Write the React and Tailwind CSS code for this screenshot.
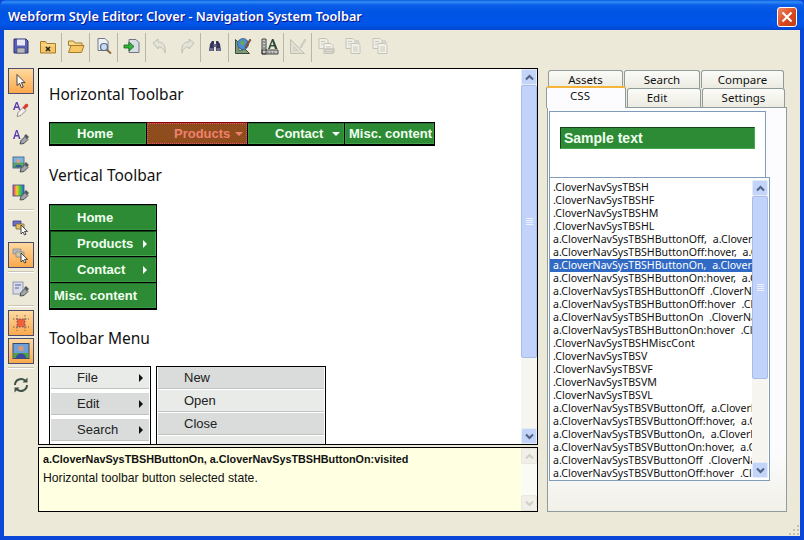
import React from "react";

const Shell = ({ children, className = "" }) => (
  <svg width="18" height="18" viewBox="0 0 18 18" className={className}>
    {children}
  </svg>
);

const SaveIcon = () => (
  <Shell>
    <path d="M2 2h12l2 2v12H2z" fill="#5a62b8" stroke="#2c2f6e" />
    <rect x="5" y="2.500" width="8" height="6" fill="#e8e8f4" />
    <rect x="5" y="11" width="8" height="5" fill="#b8b8b8" stroke="#44446a" strokeWidth=".6" />
  </Shell>
);
const FolderIcon = ({ mark }) => (
  <Shell>
    <path d="M1.500 4.500h5l1.500 2h8.500v9.500h-15z" fill="#f3c768" stroke="#a67c28" />
    <path d="M2 8h14" stroke="#fbe3a0" />
    {mark && <path d="M7 10l4 4M11 10l-4 4" stroke="#222" strokeWidth="1.600" />}
  </Shell>
);
const OpenFolderIcon = () => (
  <Shell>
    <path d="M1.500 4h5l1.500 2h7v2.500h-13.500z" fill="#f6d98c" stroke="#a67c28" />
    <path d="M1.500 15.500l2.500-7h13l-2.500 7z" fill="#f5c765" stroke="#a67c28" />
  </Shell>
);
const DocSearchIcon = () => (
  <Shell>
    <path d="M3 1.500h7l3 3v9h-10z" fill="#eef0f4" stroke="#70788a" />
    <circle cx="9" cy="10" r="3.500" fill="#c8dcf4" stroke="#5a6a88" strokeWidth="1.200" />
    <path d="M11.500 12.500l4.500 4" stroke="#8a6a40" strokeWidth="2" />
  </Shell>
);
const ImportIcon = () => (
  <Shell>
    <path d="M6 2.500h7l3 3v10h-10z" fill="#d8dde4" stroke="#6e7684" />
    <path d="M1 8h5V5l5 4.500-5 4.500v-3H1z" fill="#2fb53a" stroke="#14601c" strokeWidth=".8" />
  </Shell>
);
const UndoIcon = ({ flip }) => (
  <Shell>
    <g transform={flip ? "matrix(-1 0 0 1 18 0)" : undefined}>
      <path d="M2 6l5-4v3c5 0 8 3 7 11-1-4-3-6-7-6v2z" fill="#e4e3da" stroke="#c0bfb4" />
    </g>
  </Shell>
);
const BinocularsIcon = () => (
  <Shell>
    <path d="M3 14l1-7 2-3h2v10zM10 14V4h2l2 3 1 7z" fill="#34345c" />
    <rect x="7.500" y="7" width="3" height="3" fill="#6a6a90" />
    <rect x="3.500" y="11" width="4" height="3" fill="#6d6d94" />
    <rect x="10.500" y="11" width="4" height="3" fill="#6d6d94" />
  </Shell>
);
const TriangleRuler = ({ disabled }) => (
  <Shell>
    <path d="M1.500 2.500v14h14z" fill={disabled ? "#e0dfd4" : "#7c9a78"} stroke={disabled ? "#c0bfb2" : "#3d4a3a"} />
    <path d="M5 10v3.500h3.500z" fill="#ece9d8" stroke={disabled ? "#c0bfb2" : "#3d4a3a"} strokeWidth=".7" />
    {!disabled && <circle cx="9" cy="7" r="5.500" fill="#4c8cd8" stroke="#2f5070" strokeWidth=".7" />}
    {!disabled && <path d="M6 5l3-2 2 3-3 3z" fill="#68a850" />}
    <path d="M11 10l5-8 1 1-5 8z" fill={disabled ? "#d4d3c8" : "#c85a20"} stroke={disabled ? "#c0bfb2" : "#40361c"} strokeWidth=".6" />
  </Shell>
);
const RulerAIcon = () => (
  <Shell>
    <path d="M1 2h4v15H1zM1 13h16v4H1z" fill="#c8ccc8" stroke="#333" strokeWidth=".9" />
    <path d="M7 12l4-10h1.500l4 10h-2.500l-.8-2.500h-3.400l-.8 2.500zM10 8h2.500l-1.200-3.500z" fill="#2f4a3a" />
    <path d="M2 5h2M2 8h2M2 11h2M7 14.500v2M10 14.500v2M13 14.500v2" stroke="#333" strokeWidth=".7" />
  </Shell>
);
const CopyDocs = ({ variant }) => (
  <Shell>
    <path d="M2 1.500h7l2 2v8h-9z" fill="#efeee6" stroke="#c4c3b8" />
    <path d="M7 6.500h7l2 2v8h-9z" fill="#f3f2ea" stroke="#c4c3b8" />
    <path d="M4 4.500h4M4 7h2M9 10h5M9 12h5M9 14h5" stroke="#c8c7bc" />
    {variant === 0 && <rect x="8" y="12" width="9" height="3" fill="#dcdbd0" stroke="#bbbaae" />}
    {variant > 0 && <path d="M11 3h4v2h2l-3 3-3-3z" fill="#d4d3c8" />}
  </Shell>
);

const ArrowIcon = () => (
  <Shell>
    <path d="M5 2.500v11l2.600-2.200 1.900 4.500 1.800-.8-1.900-4.400h3.600z" fill="#fff" stroke="#333" strokeWidth=".9" strokeLinejoin="round" />
  </Shell>
);
const PaintAIcon = () => (
  <Shell>
    <path d="M1 10l3-8h1.500l3 8H6.800l-.5-2H3.200l-.5 2zM3.700 6.500h2.200L4.800 3.500z" fill="#5a3ab0" />
    <path d="M5 16.500l1-4 5-5 3 3-5 5z" fill="#eee" stroke="#7a6a6a" strokeWidth=".7" />
    <path d="M10.500 7.500l3-3.500c2-1 3.500 1 2.500 2.500l-3.200 3z" fill="#d84030" />
  </Shell>
);
const Dropper = () => (
  <>
    <path d="M8 16l1-3.500 4-4 3 3-4 4z" fill="#a0a4a8" stroke="#40444a" strokeWidth=".9" />
    <path d="M12 8l2-2 3 3-2 2z" fill="#555a60" />
  </>
);
const ABrushIcon = () => (
  <Shell>
    <path d="M1 11l3-9h1.500l3 9H6.800l-.5-2.500H3.200l-.5 2.500zM3.700 7h2.200L4.800 3.500z" fill="#5a3ab0" />
    <Dropper />
  </Shell>
);
const ImageBrushIcon = ({ rainbow }) => (
  <Shell>
    <defs>
      <linearGradient id="rb">
        <stop offset="0" stopColor="#e8308c" />
        <stop offset=".35" stopColor="#f0d020" />
        <stop offset=".7" stopColor="#30c050" />
        <stop offset="1" stopColor="#3060f0" />
      </linearGradient>
    </defs>
    <rect x="1" y="1" width="11" height="11" fill={rainbow ? "url(#rb)" : "#58a860"} stroke="#3a4a8a" strokeWidth=".8" />
    {!rainbow && <rect x="1.500" y="1.500" width="10" height="5" fill="#7ab0e8" />}
    {!rainbow && <circle cx="6.500" cy="5" r="2" fill="#e0a080" />}
    {!rainbow && <path d="M3 11c0-3 7-3 7 0z" fill="#4050a0" />}
    <Dropper />
  </Shell>
);
const LayersIcon = ({ pale }) => (
  <Shell>
    <path d="M1 3h8v5H1z" fill={pale ? "#b8b8c0" : "#6a70c8"} stroke={pale ? "#8a8a90" : "#3a3e80"} strokeWidth=".8" />
    <path d="M4 6h8v5H4z" fill={pale ? "#d0c8a8" : "#e8c060"} stroke={pale ? "#8a8a80" : "#7a6a40"} strokeWidth=".8" />
    <path d="M9 7v9l2-2 1.500 3 1.500-.8-1.500-2.800h3z" fill="#fff" stroke="#333" strokeWidth=".9" />
  </Shell>
);
const PageBrushIcon = () => (
  <Shell>
    <rect x="1" y="2" width="10" height="12" fill="#d8dce8" stroke="#8088a0" strokeWidth=".8" />
    <path d="M3 5h6M3 8h4" stroke="#5060a8" strokeWidth="1.200" />
    <Dropper />
  </Shell>
);
const MarginsIcon = () => (
  <Shell>
    <rect x="5" y="5" width="8" height="8" fill="#f0603a" />
    <path d="M1 5h16M1 13h16M5 1v16M13 1v16" stroke="#4a4a6a" strokeDasharray="1.500 1.500" strokeWidth=".8" />
  </Shell>
);
const PortraitIcon = () => (
  <Shell>
    <rect x="1" y="1.500" width="16" height="15" fill="#6ca0dc" stroke="#3a4a70" />
    <rect x="1.500" y="11" width="15" height="5" fill="#50a040" />
    <circle cx="9" cy="6.500" r="2.800" fill="#d89878" />
    <path d="M4 16c0-6 10-6 10 0z" fill="#3a4aa0" />
  </Shell>
);
const RefreshIcon = () => (
  <Shell>
    <path d="M3 9a6 6 0 0 1 10.200-4.200" fill="none" stroke="#3f5248" strokeWidth="2" />
    <path d="M15 9a6 6 0 0 1-10.200 4.200" fill="none" stroke="#3f5248" strokeWidth="2" />
    <path d="M15.500 1.500v5h-5zM2.500 16.500v-5h5z" fill="#3f5248" />
  </Shell>
);

const topTools = [
  <SaveIcon />, <FolderIcon mark />, "sep", <OpenFolderIcon />, "sep", <DocSearchIcon />, "sep", <ImportIcon />, "sep",
  <UndoIcon />, <UndoIcon flip />, "sep", <BinocularsIcon />, "sep", <TriangleRuler />, <RulerAIcon />, "sep",
  <TriangleRuler disabled />, "sep", <CopyDocs variant={0} />, <CopyDocs variant={1} />, <CopyDocs variant={2} />,
];

const sideTools = [
  { icon: <ArrowIcon />, on: true },
  { icon: <PaintAIcon /> },
  { icon: <ABrushIcon /> },
  { icon: <ImageBrushIcon /> },
  { icon: <ImageBrushIcon rainbow /> },
  "sep",
  { icon: <LayersIcon /> },
  { icon: <LayersIcon pale />, on: true },
  "sep",
  { icon: <PageBrushIcon /> },
  "sep",
  { icon: <MarginsIcon />, on: true },
  { icon: <PortraitIcon />, on: true },
  "sep",
  { icon: <RefreshIcon /> },
];

const cssRows = [
  ".CloverNavSysTBSH",
  ".CloverNavSysTBSHF",
  ".CloverNavSysTBSHM",
  ".CloverNavSysTBSHL",
  "a.CloverNavSysTBSHButtonOff, a.CloverNavSysTBSHButtonOff:visited",
  "a.CloverNavSysTBSHButtonOff:hover, a.CloverNavSysTBSHButtonOff:active",
  "a.CloverNavSysTBSHButtonOn, a.CloverNavSysTBSHButtonOn:visited",
  "a.CloverNavSysTBSHButtonOn:hover, a.CloverNavSysTBSHButtonOn:active",
  "a.CloverNavSysTBSHButtonOff .CloverNavSysTBSHArrow",
  "a.CloverNavSysTBSHButtonOff:hover .CloverNavSysTBSHArrow",
  "a.CloverNavSysTBSHButtonOn .CloverNavSysTBSHArrow",
  "a.CloverNavSysTBSHButtonOn:hover .CloverNavSysTBSHArrow",
  ".CloverNavSysTBSHMiscCont",
  ".CloverNavSysTBSV",
  ".CloverNavSysTBSVF",
  ".CloverNavSysTBSVM",
  ".CloverNavSysTBSVL",
  "a.CloverNavSysTBSVButtonOff, a.CloverNavSysTBSVButtonOff:visited",
  "a.CloverNavSysTBSVButtonOff:hover, a.CloverNavSysTBSVButtonOff:active",
  "a.CloverNavSysTBSVButtonOn, a.CloverNavSysTBSVButtonOn:visited",
  "a.CloverNavSysTBSVButtonOn:hover, a.CloverNavSysTBSVButtonOn:active",
  "a.CloverNavSysTBSVButtonOff .CloverNavSysTBSVArrow",
  "a.CloverNavSysTBSVButtonOff:hover .CloverNavSysTBSVArrow",
];

function ScrollArrow({ up, disabled }) {
  return (
    <div
      className={`w-[16px] h-[16px] shrink-0 rounded-[2px] border flex items-center justify-center ${
        disabled ? "border-[#e8e8e0] bg-[#f1f0e8]" : "border-[#e4ecfc] bg-[#c4d4f8]"
      }`}
    >
      <svg width="9" height="7" viewBox="0 0 9 7">
        <path
          d={up ? "M1 5.500l3.500-3.500 3.500 3.500" : "M1 1.500l3.500 3.500 3.500-3.500"}
          fill="none"
          stroke={disabled ? "#cfcfc6" : "#4d6185"}
          strokeWidth="2"
        />
      </svg>
    </div>
  );
}

function Scrollbar({ thumb, className = "" }) {
  return (
    <div className={`w-[16px] shrink-0 flex flex-col bg-[#f6f5f0] ${className}`}>
      <ScrollArrow up />
      <div className="flex-1 min-h-0 flex flex-col">
        <div
          className="rounded-[2px] border border-[#a8bce8] bg-[#c2d3fb] flex flex-col items-center justify-center gap-[1px]"
          style={{ height: thumb }}
        >
          <div className="w-[7px] h-[1px] bg-[#eef3ff]" />
          <div className="w-[7px] h-[1px] bg-[#eef3ff]" />
          <div className="w-[7px] h-[1px] bg-[#eef3ff]" />
          <div className="w-[7px] h-[1px] bg-[#eef3ff]" />
        </div>
      </div>
      <ScrollArrow />
    </div>
  );
}

function Caret({ dir, color = "#ffffff" }) {
  return (
    <svg width="8" height="8" viewBox="0 0 8 8" className="shrink-0">
      <path d={dir === "down" ? "M0 2h8L4 6z" : "M2 0l4 4-4 4z"} fill={color} />
    </svg>
  );
}

const arial = "font-['Liberation_Sans',Arial,sans-serif]";

function Heading({ children, className = "" }) {
  return <h2 className={`text-[15.500px] leading-[20px] text-[#111] font-['Noto_Sans',sans-serif] ${className}`}>{children}</h2>;
}

function HBtn({ width, label, on, caret, misc }) {
  return (
    <div
      className={`h-[21px] pt-[1px] flex items-center font-bold text-[13px] shrink-0 ${misc ? "pl-[3px]" : "pl-[26px] pr-[3px]"} ${
        on
          ? "bg-[#8f4c1c] text-[#f08070] border border-dotted border-[#e8507a] shadow-[0_-1px_0_#8b0000]"
          : "bg-[#2e8b35] text-[#f0fff0] border border-t-[#2a6f2e] border-l-[#3a9a40] border-r-[#3a9a40] border-b-[#44a04a]"
      }`}
      style={{ width }}
    >
      <span className="flex-1">{label}</span>
      {caret && <Caret dir="down" color={on ? "#f08070" : "#ffffff"} />}
    </div>
  );
}

function VBtn({ label, arrow, sunk, misc }) {
  return (
    <div
      className={`h-[25px] flex items-center font-bold text-[13px] text-[#f0fff0] bg-[#2e8b35] border ${
        sunk ? "border-t-[#15461a] border-l-[#15461a] border-r-[#48a84e] border-b-[#48a84e]" : "border-[#3a9a40] border-t-[#2a6f2e]"
      } ${misc ? "pl-[3px]" : "pl-[26px]"} pr-[6px]`}
    >
      <span className="flex-1">{label}</span>
      {arrow && <Caret dir="right" />}
    </div>
  );
}

function MenuItem({ label, arrow, pale, left }) {
  return (
    <div
      className={`h-[22px] flex items-center text-[13px] text-[#222] border-b border-[#bfc3c1] mb-[1px] ${
        pale ? "bg-[#e9ebe9]" : "bg-[#d9dcda]"
      } ${left} pr-[4px]`}
    >
      <span className="flex-1">{label}</span>
      {arrow && <Caret dir="right" color="#111" />}
    </div>
  );
}

function Tab({ width, label, height = "h-[18px] leading-[18px]", inset = "" }) {
  return (
    <div
      className={`shrink-0 rounded-t-[3px] border border-b-0 border-[#919b9c] bg-[linear-gradient(#fbfbf8,#ecebe2)] text-center text-[11.500px] text-[#111] ${height} ${inset}`}
      style={{ width }}
    >
      {label}
    </div>
  );
}

export default function App() {
  return (
    <div className="w-[804px] h-[540px] overflow-hidden flex flex-col font-['Noto_Sans',sans-serif] bg-[#0a46d8]">
      {/* title bar */}
      <div className="h-[30px] shrink-0 flex items-center justify-between pl-[8px] pr-[7px] rounded-t-[6px] bg-[linear-gradient(#0a5ce0_0px,#2f8cf5_2px,#0a5ee8_5px,#0054e3_12px,#0056ea_24px,#0048d0_30px)]">
        <span className="mt-[4px] text-[12.700px] text-white font-semibold [text-shadow:1px_1px_#0f1089]">
          Webform Style Editor: Clover - Navigation System Toolbar
        </span>
        <div className="mt-[4px] w-[20px] h-[20px] rounded-[3px] border border-white bg-[linear-gradient(135deg,#ee8a66,#d9481f_55%,#c23a14)] flex items-center justify-center">
          <svg width="12" height="12" viewBox="0 0 12 12">
            <path d="M1.500 1.500l9 9M10.500 1.500l-9 9" stroke="#fff" strokeWidth="2.200" />
          </svg>
        </div>
      </div>

      {/* window client */}
      <div className="flex-1 min-h-0 mx-[4px] mb-[4px] bg-[#ece9d8] flex flex-col relative">
        <div className="h-[38px] shrink-0 flex items-start pl-[3px] pt-[2px]">
          {topTools.map((t, i) =>
            t === "sep" ? (
              <div key={i} className="w-[1px] h-[29px] mt-[1px] bg-[#b9b6a6]" />
            ) : (
              <div key={i} className="w-[27px] h-[27px] flex items-center justify-center">
                {t}
              </div>
            )
          )}
        </div>

        <div className="flex-1 min-h-0 flex">
          {/* tool strip */}
          <div className="w-[26px] ml-[4px] mr-[4px] flex flex-col gap-[2px] shrink-0">
            {sideTools.map((t, i) =>
              t === "sep" ? (
                <div key={i} className="h-[2px] my-[1px] bg-[#c8c5b4] border-b border-white" />
              ) : (
                <div
                  key={i}
                  className={`h-[26px] flex items-center justify-center ${
                    t.on ? "border border-[#4b4b6f] bg-[linear-gradient(#ffd9a0,#fba94c)]" : ""
                  }`}
                >
                  {t.icon}
                </div>
              )
            )}
          </div>

          {/* centre column */}
          <div className="w-[500px] shrink-0 flex flex-col h-[444px]">
            <div className="h-[377px] shrink-0 border border-black bg-white flex">
              <div className={`flex-1 min-w-0 overflow-hidden pl-[10px] pt-[15px] ${arial}`}>
                <Heading className="mb-[18px]">Horizontal Toolbar</Heading>
                <div className="w-[386px] h-[24px] flex gap-[1px] bg-black pt-[1px] px-[1px] pb-[2px]">
                  <HBtn width={96} label="Home" />
                  <HBtn width={100} label="Products" on caret />
                  <HBtn width={96} label="Contact" caret />
                  <HBtn width={89} label="Misc. content" misc />
                </div>

                <Heading className="mt-[19px] mb-[19px]">Vertical Toolbar</Heading>
                <div className="w-[108px] flex flex-col gap-[1px] bg-black pt-[1px] px-[1px] pb-[2px]">
                  <VBtn label="Home" />
                  <VBtn label="Products" arrow sunk />
                  <VBtn label="Contact" arrow />
                  <VBtn label="Misc. content" misc />
                </div>

                <Heading className="mt-[18px] mb-[18px]">Toolbar Menu</Heading>
                <div className="flex gap-[5px] items-start">
                  <div className="w-[102px] border border-black px-[1px] bg-white">
                    <MenuItem label="File" arrow pale left="pl-[26px]" />
                    <div className="h-[3px]" />
                    <MenuItem label="Edit" arrow left="pl-[26px]" />
                    <div className="h-[3px]" />
                    <MenuItem label="Search" arrow left="pl-[26px]" />
                    <div className="h-[3px]" />
                    <MenuItem label="" left="pl-[26px]" />
                  </div>
                  <div className="w-[170px] border border-black px-[1px] bg-white">
                    <MenuItem label="New" left="pl-[26px]" />
                    <MenuItem label="Open" pale left="pl-[26px]" />
                    <MenuItem label="Close" left="pl-[26px]" />
                    <MenuItem label="" pale left="pl-[26px]" />
                  </div>
                </div>
              </div>
              <Scrollbar thumb={273} />
            </div>

            <div className={`h-[65px] mt-[2px] shrink-0 border border-black bg-[#ffffe1] flex ${arial}`}>
              <div className="flex-1 min-w-0 pl-[4px] pt-[4px] text-[#111]">
                <div className="font-bold text-[10.800px] leading-[15px] mb-[4px]">a.CloverNavSysTBSHButtonOn, a.CloverNavSysTBSHButtonOn:visited</div>
                <div className="text-[12.200px] leading-[15px]">Horizontal toolbar button selected state.</div>
              </div>
              <div className="w-[16px] flex flex-col justify-between bg-[#fbfbf6]">
                <ScrollArrow up disabled />
                <ScrollArrow disabled />
              </div>
            </div>
          </div>

          {/* right column */}
          <div className="w-[240px] ml-[9px] pt-[2px] shrink-0 flex flex-col h-[444px]">
            <div className="flex gap-[1px] pl-[1px]">
              <Tab width={75} label="Assets" />
              <Tab width={76} label="Search" />
              <Tab width={83} label="Compare" />
            </div>
            <div className="flex gap-[1px] relative z-10 h-[19px]">
              <div className="w-[80px] -ml-[1px] h-[22px] -mt-[2px] pr-[12px] shrink-0 rounded-t-[3px] border-t-[2px] border-t-[#f5b53a] border-x border-x-[#919b9c] bg-[#fcfcfe] text-center text-[11.500px] leading-[15px] text-[#111]">
                CSS
              </div>
              <Tab width={74} label="Edit" height="h-[19px] leading-[17px]" inset="pr-[14px]" />
              <Tab width={83} label="Settings" height="h-[19px] leading-[17px]" />
            </div>
            <div className="flex-1 min-h-0 border border-[#919b9c] bg-[linear-gradient(#fcfcfe,#fcfcfe_85%,#f1f0e8)] pl-[1px] pt-[3px]">
              <div className="w-[217px] h-[67px] border border-[#7f9db9] bg-white flex items-start">
                <div className={`ml-[10px] mt-[15px] w-[195px] h-[22px] pl-[3px] flex items-center bg-[#2e8b35] border border-t-[#15461a] border-l-[#15461a] border-r-[#48a84e] border-b-[#48a84e] text-[14px] font-bold text-[#f0fff0] ${arial}`}>
                  Sample text
                </div>
              </div>
              <div className="w-[221px] h-[304px] -mt-[1px] border border-[#7f9db9] bg-white flex">
                <div className="flex-1 min-w-0 overflow-hidden pt-[3px]">
                  {cssRows.map((row, i) => (
                    <div
                      key={row}
                      className={`h-[13px] pl-[3px] whitespace-nowrap overflow-hidden text-[10.600px] leading-[13px] [word-spacing:3px] ${
                        i === 6 ? "bg-[#316ac5] text-white" : "text-[#111]"
                      }`}
                    >
                      {row}
                    </div>
                  ))}
                </div>
                <Scrollbar thumb={183} className="my-[2px] mr-[1px]" />
              </div>
            </div>
          </div>
        </div>

        {/* resize grip */}
        <svg width="12" height="12" viewBox="0 0 12 12" className="absolute right-0 bottom-0">
          <path d="M9 1h2v2H9zM5 5h2v2H5zM9 5h2v2H9zM1 9h2v2H1zM5 9h2v2H5zM9 9h2v2H9z" fill="#c5c2b0" />
        </svg>
      </div>
    </div>
  );
}
